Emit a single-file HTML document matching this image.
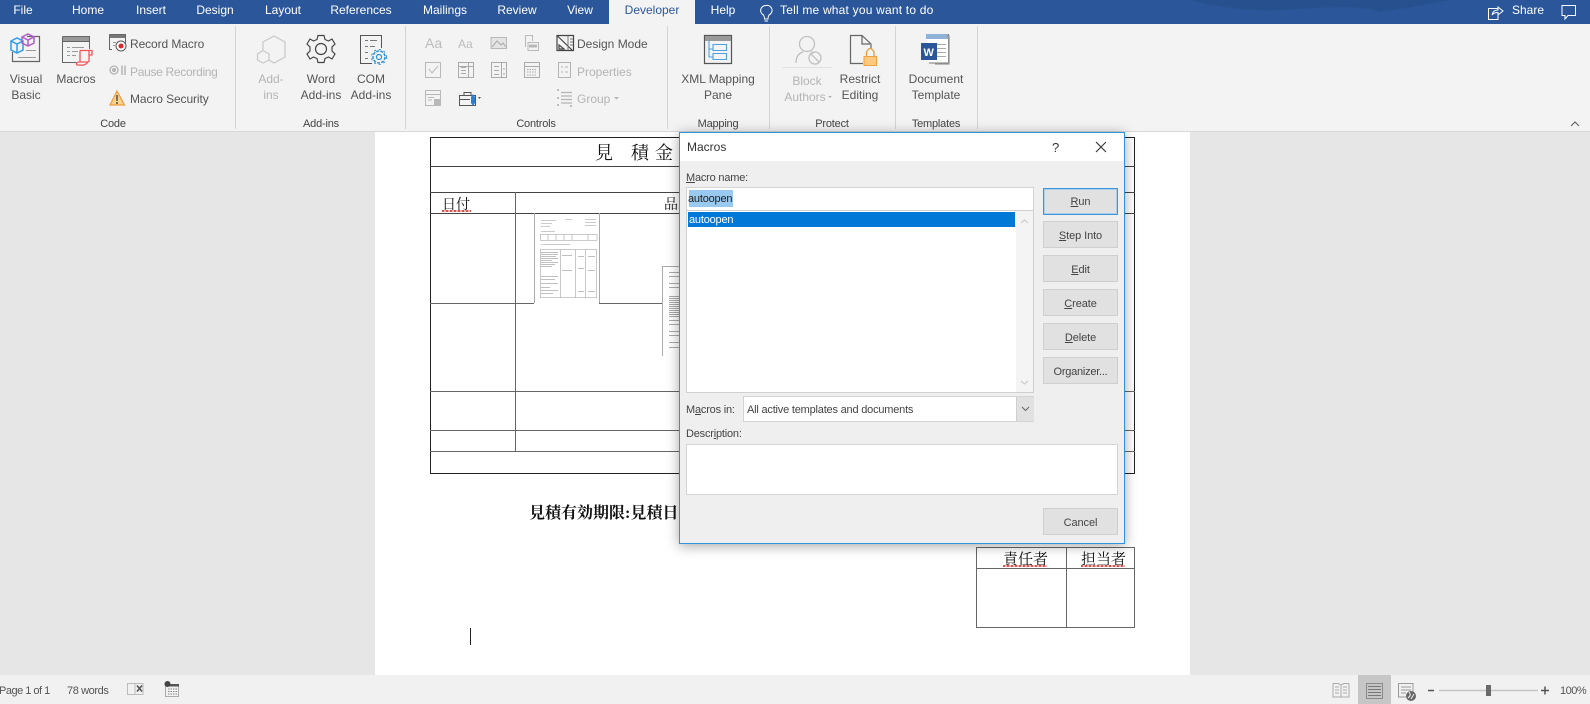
<!DOCTYPE html>
<html lang="en"><head><meta charset="utf-8"><title>Macros</title>
<style>
html,body{margin:0;padding:0}
body{width:1590px;height:704px;overflow:hidden;position:relative;background:#e6e6e6;font-family:"Liberation Sans","Noto Sans CJK JP",sans-serif;font-size:12px;color:#444}
#r{position:absolute;left:0;top:0;width:1590px;height:704px;filter:blur(.35px)}
.a{position:absolute}
.t{position:absolute;white-space:nowrap;line-height:16px}
.c{transform:translateX(-50%)}
.w{color:#fff}
.g{color:#b4b4b4}
.l{color:#555}
.s{position:absolute;top:26px;width:1px;height:103px;background:#d4d4d4}
.d{font-size:11px;color:#444;letter-spacing:-.2px}
.b{position:absolute;left:363px;width:73px;height:25px;background:#e1e1e1;border:1px solid #cfcfcf;text-align:center;line-height:28px;font-size:11px;color:#444;letter-spacing:-.1px}
.j{position:absolute;font-family:"Liberation Serif","Noto Serif CJK SC","Noto Sans CJK JP",serif;color:#111;white-space:nowrap;line-height:20px}
.sq{position:absolute;height:2px;background:repeating-linear-gradient(90deg,#d9534f 0 2px,#f3b5b3 2px 4px)}
</style></head><body><div id="r">

<!-- title/tab bar -->
<div class="a" style="left:0;top:0;width:1590px;height:24px;background:#2b579a"></div>
<svg class="a" style="left:1180px;top:0" width="300" height="24"><path d="M10 0Q60 14 120 9T200 12Q240 6 270 0Z" fill="#27508e"/></svg>
<div class="a" style="left:609px;top:0;width:86px;height:24px;background:#f3f3f3"></div>
<span class="t c w" style="left:23px;top:2px">File</span>
<span class="t c w" style="left:88px;top:2px">Home</span>
<span class="t c w" style="left:151px;top:2px">Insert</span>
<span class="t c w" style="left:215px;top:2px">Design</span>
<span class="t c w" style="left:283px;top:2px">Layout</span>
<span class="t c w" style="left:361px;top:2px">References</span>
<span class="t c w" style="left:445px;top:2px">Mailings</span>
<span class="t c w" style="left:517px;top:2px">Review</span>
<span class="t c w" style="left:580px;top:2px">View</span>
<span class="t c" style="left:652px;top:2px;color:#2b579a">Developer</span>
<span class="t c w" style="left:723px;top:2px">Help</span>
<span class="t w" style="left:780px;top:2px;letter-spacing:.2px">Tell me what you want to do</span>
<span class="t w" style="left:1512px;top:2px">Share</span>

<!-- ribbon -->
<div class="a" style="left:0;top:24px;width:1590px;height:107px;background:#f3f3f3;border-bottom:1px solid #d8d8d8"></div>
<div class="s" style="left:235px"></div><div class="s" style="left:405px"></div><div class="s" style="left:667px"></div><div class="s" style="left:769px"></div><div class="s" style="left:895px"></div><div class="s" style="left:977px"></div>

<span class="t c l" style="left:26px;top:71px">Visual</span><span class="t c l" style="left:26px;top:87px">Basic</span>
<span class="t c l" style="left:76px;top:71px">Macros</span>
<span class="t l" style="left:130px;top:36px;letter-spacing:-.1px">Record Macro</span>
<span class="t g" style="left:130px;top:64px;letter-spacing:-.3px">Pause Recording</span>
<span class="t l" style="left:130px;top:91px;letter-spacing:-.1px">Macro Security</span>
<span class="t c d" style="left:113px;top:116px">Code</span>
<span class="t c g" style="left:271px;top:71px">Add-</span><span class="t c g" style="left:271px;top:87px">ins</span>
<span class="t c l" style="left:321px;top:71px">Word</span><span class="t c l" style="left:321px;top:87px">Add-ins</span>
<span class="t c l" style="left:371px;top:71px">COM</span><span class="t c l" style="left:371px;top:87px">Add-ins</span>
<span class="t c d" style="left:321px;top:116px">Add-ins</span>
<span class="t l" style="left:577px;top:36px">Design Mode</span>
<span class="t g" style="left:577px;top:64px">Properties</span>
<span class="t g" style="left:577px;top:91px">Group</span>
<span class="t c d" style="left:536px;top:116px">Controls</span>
<span class="t c l" style="left:718px;top:71px">XML Mapping</span><span class="t c l" style="left:718px;top:87px">Pane</span>
<span class="t c d" style="left:718px;top:116px">Mapping</span>
<span class="t c g" style="left:807px;top:73px">Block</span><span class="t c g" style="left:805px;top:89px">Authors</span>
<span class="t c l" style="left:860px;top:71px">Restrict</span><span class="t c l" style="left:860px;top:87px">Editing</span>
<span class="t c d" style="left:832px;top:116px">Protect</span>
<span class="t c l" style="left:936px;top:71px">Document</span><span class="t c l" style="left:936px;top:87px">Template</span>
<span class="t c d" style="left:936px;top:116px">Templates</span>

<!-- document page -->
<div class="a" style="left:375px;top:132px;width:815px;height:543px;background:#fff"></div>
<svg class="a" style="left:0;top:0" width="1590" height="704" fill="none">
 <!-- main table -->
 <g stroke="#333" stroke-width="1">
  <path d="M430.500 137.500H1134.500V473.500H430.500Z" stroke="#222"/>
  <path d="M430 166.500H1135M430 192.500H1135M430 213.500H1135" stroke="#444"/>
  <path d="M515.500 192V452M430 303.500H534M599 303.500H662M430 391.500H1135M430 430.500H1135M430 451.500H1135" stroke="#666"/>
  <path d="M534.500 213V303M599.500 213V303" stroke="#aaa"/>
  <path d="M662.500 266V356M662 266.500H690" stroke="#aaa"/>
  <path d="M976.500 547.500H1134.500V627.500H976.500ZM1066.500 547V628M976 568.500H1135" stroke="#666"/>
  <path d="M470.500 628V645" stroke="#222"/>
 </g>
 <rect x="535" y="214" width="64" height="89" fill="#fff"/>
 <!-- thumbnail 1 -->
 <g stroke="#bbb" stroke-width=".8">
  <path d="M541 220.500H556M565 219.500H572M585 219.500H596M541 223.500H552M585 222.500H596M541 226.500H550M585 225.500H596M541 231.500H555"/>
  <path d="M540.500 234V240M597 234V240M540 234.500H597M540 240.500H597M548 234V240M556 234V240M564 234V240M572 234V240M588 234V240"/>
  <path d="M541 244.500H570"/>
  <path d="M540.500 249V298M596.500 249V298M540 249.500H597M560.500 249V298M575.500 249V298M585.500 249V298M540 297.500H597"/>
 </g>
 <g stroke="#aaa" stroke-width=".8"><path d="M541 252.500H558M541 254.500H558M541 256.500H556M541 258.500H558M541 260.500H552M541 262.500H558M541 264.500H555M541 266.500H552M562 255.500H572M578 256.500H584M588 256.500H595M562 270.500H572M578 268.500H584M588 270.500H595M541 276.500H558M541 279.500H555M541 283.500H558M541 287.500H550M541 290.500H558M541 293.500H553M578 291.500H584M588 291.500H595"/></g>
 <!-- thumbnail 2 -->
 <g stroke="#aaa" stroke-width="1"><path d="M669 272.500H680M669 276.500H680M669 283.500H680M669 287.500H680M669 296.500H680M669 298.500H680M669 300.500H680M669 302.500H680M669 304.500H680M669 306.500H680M669 308.500H680M669 310.500H680M669 312.500H680M669 314.500H680M669 316.500H680M669 320.500H680M669 324.500H680M669 331.500H680M669 335.500H680M669 342.500H680M669 347.500H680"/></g>

 <!-- ribbon icons -->
 <!-- visual basic -->
 <path d="M27 36.500H39.500V61.500H12.500V52" stroke="#666" stroke-width="1.200"/><path d="M26 50.500H36M18 57.500H36" stroke="#999"/>
 <path d="M11 41L17 38L23 41V50L17 53L11 50ZM11 41L17 44L23 41M17 44V53" stroke="#2f9ee6" stroke-width="1.500"/>
 <path d="M22 37L28 34L34 37V43L28 46L22 43ZM22 37L28 40L34 37M28 40V46" stroke="#b05ec8" stroke-width="1.500"/>
 <!-- macros -->
 <path d="M62.500 36.500H89.500V49M76 62.500H62.500V36.500M62 41.500H90" stroke="#666"/><path d="M63 37H89V41H63Z" fill="#999" stroke="none"/><path d="M67 47.500H70M72 47.500H84M67 51.500H70M72 51.500H78M67 55.500H70M72 55.500H76" stroke="#999"/>
 <path d="M80 50.500H92V55H89M80 50.500V62M80 62H88Q85 66 80 65H77Q75 62 80 62M89 51V62" stroke="#f0565a" stroke-width="1.300"/>
 <!-- record macro -->
 <path d="M109.500 34.500H125.500V44M112 49.500H109.500V34.500" stroke="#666"/><path d="M110 35H125V38H110Z" fill="#777"/><path d="M113 42.500H116M113 45.500H115" stroke="#999"/>
 <circle cx="121" cy="46" r="5" fill="#fff" stroke="#555"/><circle cx="121" cy="46" r="2.500" fill="#e0262b"/>
 <!-- pause -->
 <circle cx="114" cy="70" r="4" stroke="#b4b4b4" stroke-width="1.300"/><circle cx="114" cy="70" r="2" fill="#b4b4b4"/><path d="M122 65.500V75M125 65.500V75" stroke="#b4b4b4" stroke-width="1.500"/>
 <!-- security -->
 <path d="M117 91L124.500 105H110Z" fill="#fbd38a" stroke="#ec9a3c" stroke-width="1.200"/><path d="M117 95V101M117 102V104" stroke="#444" stroke-width="1.400"/>
 <!-- add-ins -->
 <path d="M263 50V42L274 36L285 42V57L274 63L269 60" stroke="#c8c8c8" stroke-width="1.200"/>
 <path d="M263 50.500L269 54V60L263 63L257.500 60V54Z" stroke="#c8c8c8" stroke-width="1.200"/>
 <!-- gear -->
 <path d="M318 35.500H324L325 39.500L328.500 41L332 39L335 44L332 47V51L335 54L332 59L328.500 57L325 58.500L324 62.500H318L317 58.500L313.500 57L310 59L307 54L310 51V47L307 44L310 39L313.500 41L317 39.500Z" stroke="#444" stroke-width="1.200"/><circle cx="321" cy="49" r="5.500" stroke="#444" stroke-width="1.200"/>
 <!-- com -->
 <path d="M381.500 48V35.500H360.500V63.500H372" stroke="#555"/><path d="M365 40.500H368M370 40.500H377M365 46.500H368M370 46.500H375M365 52.500H368M365 58.500H368" stroke="#777"/>
 <circle cx="379" cy="57" r="6" stroke="#2f8fd8" stroke-width="1.500" stroke-dasharray="3 1.200"/><circle cx="379" cy="57" r="7.500" stroke="#2f8fd8" stroke-width="1" stroke-dasharray="2 3"/><circle cx="379" cy="57" r="2.500" stroke="#2f8fd8" stroke-width="1.200"/>
 <!-- controls row icons -->
 <text x="425" y="48" font-size="14" fill="#bbb" font-family="Liberation Sans">Aa</text>
 <text x="458" y="48" font-size="12" fill="#bbb" font-family="Liberation Sans">Aa</text>
 <path d="M491 37.500H506.500V48.500H491Z" stroke="#b8b8b8" fill="#e4e4e4"/><path d="M492 47L497 41L501 45L503 43L506 47" stroke="#aaa"/>
 <path d="M525.500 35.500H532.500V41M528 42.500H538.500V50.500H528ZM525.500 35.500V47" stroke="#b8b8b8"/><path d="M529 46H537" stroke="#b8b8b8" stroke-width="3"/>
 <path d="M425.500 62.500H440.500V77.500H425.500ZM429 69L432 73L438 66" stroke="#b8b8b8"/>
 <path d="M458.500 62.500H473.500V77.500H458.500ZM468.500 62V78M458 66.500H474M461 70.500H466M461 73.500H466M461 67.500H466" stroke="#aaa"/>
 <path d="M491.500 62.500H506.500V77.500H491.500ZM501.500 62V78M494 66.500H499M494 70.500H499M494 74.500H499M504 68V70M504 73V75" stroke="#aaa"/>
 <path d="M524.500 62.500H539.500V77.500H524.500ZM524 66.500H540" stroke="#aaa"/><path d="M527 69.500H537M527 72H537M527 75H537" stroke="#aaa" stroke-dasharray="1.500 1"/>
 <path d="M425.500 90.500H440.500V105.500H425.500ZM425 94.500H441" stroke="#b8b8b8"/><path d="M428 97.500H434M428 100H432" stroke="#b8b8b8"/><path d="M434 99H440V105H434Z" fill="#b8b8b8"/>
 <path d="M459.500 95.500H475.500V105.500H459.500ZM464 95V92.500H471V95M460 99.500H470" stroke="#555"/><path d="M473 94L475 97V103L473 106L471 103V97Z" fill="#2f7fd0"/><path d="M478 97L481 97L479.500 99Z" fill="#555"/>
 <!-- design mode -->
 <path d="M557 35.500H573.500V50.500H557ZM557.500 36L572 50M559 45V49H564Z" stroke="#444" stroke-width="1.200"/><path d="M568 36V50M570 39H573M570 42H573M570 45H573" stroke="#777"/>
 <path d="M558.500 62.500H570.500V77.500H558.500ZM561 67H563M561 72H563M565 67H568M565 72H568" stroke="#b4b4b4"/>
 <path d="M561 92.500H572M561 96H572M561 99.500H572M561 103H572" stroke="#b4b4b4" stroke-width="1.300"/><path d="M557 90H559M557 98H559M557 105H559M570 106H572" stroke="#aaa" stroke-width="1.500"/>
 <path d="M614 97L619 97L616.500 99.500Z" fill="#b4b4b4"/>
 <!-- xml -->
 <path d="M704.500 35.500H731.500V63.500H704.500Z" stroke="#555" stroke-width="1.200"/><path d="M705 36H731V41H705Z" fill="#999"/>
 <path d="M709 41V57H713M709 49H713M713 44.500H726.500V50.500H713ZM713 53.500H726.500V59.500H713Z" stroke="#4aa3df" stroke-width="1.100"/>
 <!-- block authors -->
 <circle cx="807" cy="44" r="7.500" stroke="#c0c0c0" stroke-width="1.300"/><path d="M796 63Q796 54 803 52M811 52L814 53" stroke="#c0c0c0" stroke-width="1.300"/><circle cx="815" cy="58" r="6" stroke="#c0c0c0" stroke-width="1.300"/><path d="M811 54L819 62" stroke="#c0c0c0" stroke-width="1.300"/><path d="M782 67.500H832" stroke="#e2e2e2"/>
 <path d="M828 96L832 96L830 98Z" fill="#b4b4b4"/>
 <!-- restrict -->
 <path d="M863 63.500H850.500V35.500H862L871 44V49M862 36V44H870" stroke="#666" stroke-width="1.200"/>
 <path d="M864 56.500H876.500V65.500H864Z" fill="#fcc97e" stroke="#f0a040"/><path d="M866.500 56V52Q870 45 874 52V56" stroke="#ec9a3c" stroke-width="1.300"/>
 <!-- doc template -->
 <path d="M926 34.500H948.500V63H929" stroke="#777" fill="#fff"/><path d="M926 34H948V39H926Z" fill="#8fb2d8"/><path d="M946 36H949V64H935" stroke="#999" stroke-width="1.300"/><path d="M937 44.500H946M937 48.500H946M937 52.500H946M937 56.500H946" stroke="#aaa"/>
 <path d="M921 43H937V60H921Z" fill="#2b579a"/><text x="923.500" y="56" font-size="11" font-weight="bold" fill="#fff" font-family="Liberation Sans">W</text>
 <!-- top bar icons -->
 <path d="M766 5.500A5 5 0 0 0 763.500 15Q764.500 16.500 764.500 19H768Q768 16.500 769 15A5 5 0 0 0 766 5.500ZM764.500 21H768" stroke="#fff"/>
 <path d="M1498 8.500H1488.500V19.500H1498V15M1492 15Q1493 10 1498 10V7L1503 11L1498 15V12.500Q1494 12.500 1492 15Z" stroke="#fff"/>
 <path d="M1562 5.500H1575.500V15.500H1568L1565 19V15.500H1562Z" stroke="#fff"/>
 <path d="M1571 126L1575 122L1579 126" stroke="#666" stroke-width="1.200"/>
</svg>

<!-- document text -->
<span class="j" style="left:595px;top:143px;font-size:18px">見</span>
<span class="j" style="left:631px;top:143px;font-size:18px">積</span>
<span class="j" style="left:655px;top:143px;font-size:18px">金</span>
<span class="j" style="left:442px;top:196px;font-size:14px">日付</span><div class="sq" style="left:442px;top:210px;width:29px"></div>
<span class="j" style="left:664px;top:196px;font-size:14px">品</span>
<span class="j" style="left:529px;top:504px;font-size:16px;font-weight:bold">見積有効期限:見積日</span>
<span class="j" style="left:1003px;top:550px;font-size:15px">責任者</span><div class="sq" style="left:1003px;top:565px;width:44px"></div>
<span class="j" style="left:1081px;top:550px;font-size:15px">担当者</span><div class="sq" style="left:1081px;top:565px;width:44px"></div>

<!-- dialog -->
<div class="a" style="left:679px;top:132px;width:444px;height:410px;background:#efefef;border:1px solid #2f92dc;box-shadow:0 2px 12px rgba(0,0,0,.35)">
 <div class="a" style="left:0;top:0;width:444px;height:28px;background:#fff"></div>
 <span class="t" style="left:7px;top:6px;color:#333">Macros</span>
 <span class="t" style="left:372px;top:7px;font-size:13px;color:#333">?</span>
 <svg class="a" style="left:414px;top:7px" width="14" height="14" fill="none"><path d="M2 2L12 12M12 2L2 12" stroke="#333" stroke-width="1.100"/></svg>
 <span class="t d" style="left:6px;top:37px"><u>M</u>acro name:</span>
 <div class="a" style="left:6px;top:54px;width:346px;height:22px;background:#fff;border:1px solid #d4d4d4"></div>
 <div class="a" style="left:9px;top:57px;width:44px;height:17px;background:#99c9ef"></div>
 <span class="t d" style="left:8px;top:58px;color:#222">autoopen</span>
 <div class="a" style="left:6px;top:77px;width:346px;height:181px;background:#fff;border:1px solid #cfcfcf"></div>
 <div class="a" style="left:336px;top:78px;width:17px;height:181px;background:#f4f4f4"></div>
 <div class="a" style="left:8px;top:79px;width:327px;height:15px;background:#0078d7"></div>
 <span class="t d" style="left:9px;top:79px;color:#fff">autoopen</span>
 <svg class="a" style="left:336px;top:80px" width="17" height="178" fill="none"><path d="M5 10L8.500 7L12 10" stroke="#c4c4c4"/><path d="M5 168L8.500 171L12 168" stroke="#c4c4c4"/></svg>
 <div class="b" style="top:55px;border:1px solid #3f95d8;box-shadow:inset 0 0 0 1px #a9cfea;line-height:27px"><u>R</u>un</div>
 <div class="b" style="top:88px"><u>S</u>tep Into</div>
 <div class="b" style="top:122px"><u>E</u>dit</div>
 <div class="b" style="top:156px"><u>C</u>reate</div>
 <div class="b" style="top:190px"><u>D</u>elete</div>
 <div class="b" style="top:224px;letter-spacing:-.25px">Or<u>g</u>anizer...</div>
 <span class="t d" style="left:6px;top:269px">M<u>a</u>cros in:</span>
 <div class="a" style="left:63px;top:263px;width:289px;height:24px;background:#fff;border:1px solid #d4d4d4"></div>
 <div class="a" style="left:336px;top:264px;width:17px;height:24px;background:#e1e1e1;border-left:1px solid #cfcfcf"></div>
 <svg class="a" style="left:337px;top:264px" width="16" height="24" fill="none"><path d="M5 10L8.500 13.500L12 10" stroke="#666"/></svg>
 <span class="t d" style="left:67px;top:269px">All active templates and documents</span>
 <span class="t d" style="left:6px;top:293px">Descr<u>i</u>ption:</span>
 <div class="a" style="left:6px;top:311px;width:430px;height:49px;background:#fff;border:1px solid #d4d4d4"></div>
 <div class="b" style="top:375px">Cancel</div>
</div>

<!-- status bar -->
<div class="a" style="left:0;top:675px;width:1590px;height:29px;background:#f1f1f1"></div>
<div class="a" style="left:1358px;top:675px;width:33px;height:29px;background:#c6c6c6"></div>
<svg class="a" style="left:0;top:675px" width="1590" height="29" fill="none">
 <path d="M127.500 8.500V19.500H135V8.500ZM135 8.500H143V19.500H135" stroke="#bbb"/><path d="M137 10.500L142 16.500M142 10.500L137 16.500" stroke="#555" stroke-width="1.600"/>
 <path d="M165.500 9.500H178.500V21.500H165.500Z" stroke="#aaa"/><path d="M168 9H179V11.500H168Z" fill="#555"/><circle cx="167.500" cy="9" r="3" fill="#444"/><path d="M168 14H177M168 16.500H177M168 19H177" stroke="#888" stroke-dasharray="1.500 1"/>
 <path d="M1333 8.500V22H1341V10M1349 8.500V22H1341M1333 8.500H1338L1341 10L1344 8.500H1349M1335 12H1339M1335 15H1339M1335 18H1339M1343 12H1347M1343 15H1347M1343 18H1347" stroke="#aaa"/>
 <path d="M1366.500 8.500H1382.500V23.500H1366.500Z" stroke="#8a8a8a"/><path d="M1368 11.500H1381M1368 14.500H1381M1368 17.500H1381M1368 20.500H1381" stroke="#777"/>
 <path d="M1398.500 8.500H1413V18M1398.500 8.500V22H1406M1401 12H1411M1401 15H1411M1401 18H1406" stroke="#999"/><circle cx="1411" cy="21" r="5" fill="#666"/><path d="M1409 17Q1412 20 1408 23M1414 19L1411 24" stroke="#eee"/>
 <path d="M1428 15.500H1434" stroke="#555" stroke-width="1.500"/>
 <path d="M1439 15.500H1538" stroke="#c4c4c4" stroke-width="1.500"/>
 <path d="M1486 10H1491V21H1486Z" fill="#6a6a6a"/>
 <path d="M1541 15.500H1549M1545 11.500V19.500" stroke="#555" stroke-width="1.500"/>
</svg>
<span class="t d" style="left:-1px;top:683px;color:#555;letter-spacing:-.5px">Page 1 of 1</span>
<span class="t d" style="left:67px;top:683px;color:#555;letter-spacing:-.4px">78 words</span>
<span class="t d" style="left:1560px;top:683px;color:#555;letter-spacing:-.5px">100%</span>
</div></body></html>
